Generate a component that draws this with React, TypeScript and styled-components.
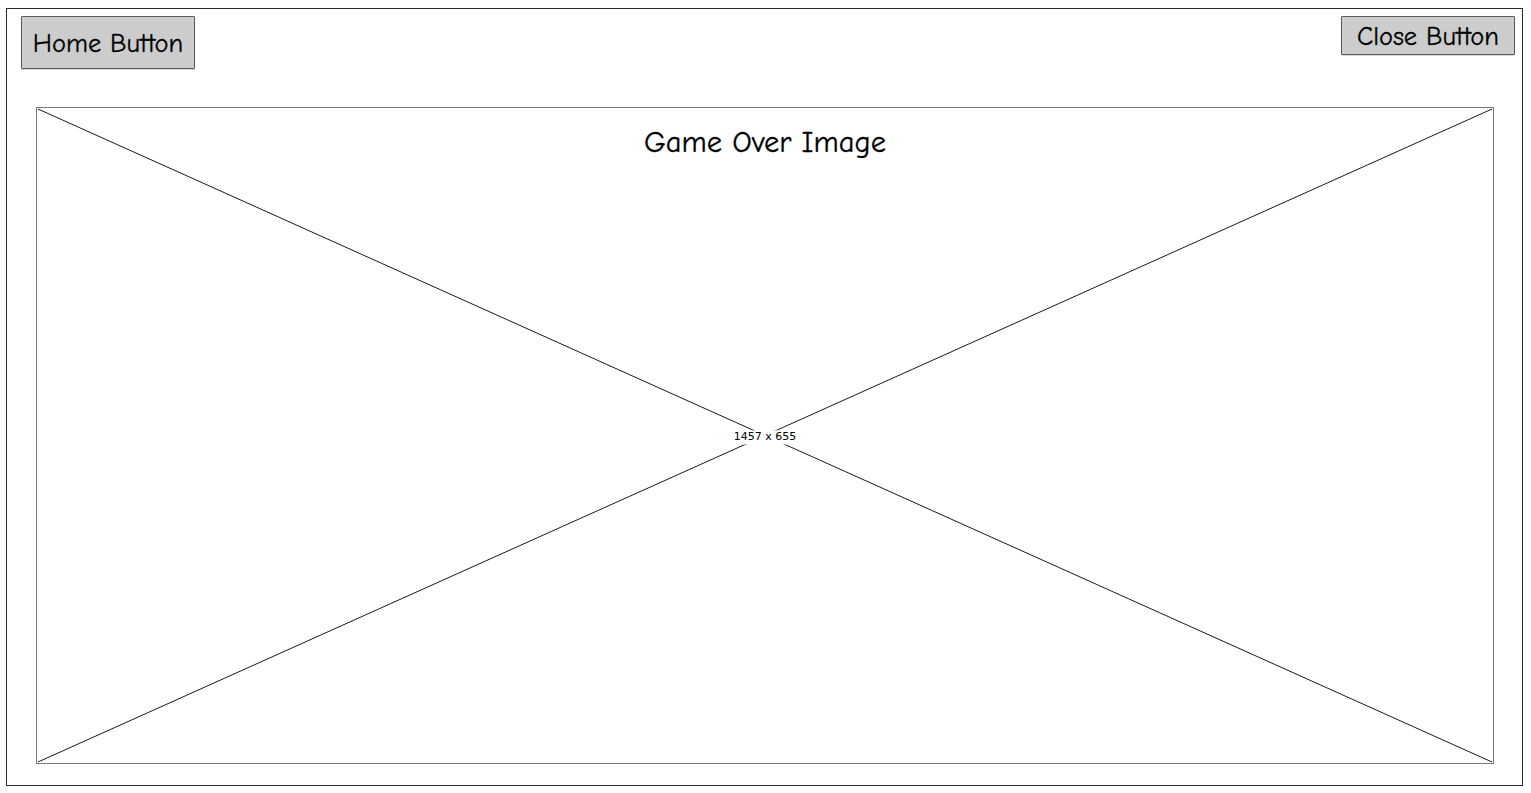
import React from 'react';
import styled, { createGlobalStyle } from 'styled-components';

const GlobalStyle = createGlobalStyle`
	html, body {
		margin: 0;
		padding: 0;
		background: #ffffff;
	}
	body {
		font-family: 'Comic Sans MS', 'Comic Neue', cursive, sans-serif;
	}
`;

const Frame = styled.div`
	box-sizing: border-box;
	display: flex;
	flex-direction: column;
	width: 1517px;
	height: 778px;
	margin: 8px 0 0 6px;
	border: 1px solid #2b2b2b;
	background: #ffffff;
`;

const Header = styled.div`
	display: flex;
	justify-content: space-between;
	align-items: flex-start;
	padding: 7px 7px 0 14px;
`;

const SketchButton = styled.button<{ $height: number; $offset: number }>`
	box-sizing: border-box;
	width: 174px;
	height: ${(p) => p.$height}px;
	padding: ${(p) => p.$offset}px 0 0;
	border: 1px solid #5a5a5a;
	border-radius: 1px;
	background: #cccccc;
	color: #000000;
	font-family: inherit;
	font-size: 26.5px;
	line-height: 1;
	cursor: pointer;
	-webkit-text-stroke: 0.3px #000000;
	box-shadow: 0 1px 0 rgba(0, 0, 0, 0.15);
`;

const ImageBox = styled.div`
	position: relative;
	box-sizing: border-box;
	width: 1458px;
	height: 657px;
	margin: 38px 0 0 29px;
	border: 1px solid #7a7a7a;
	background: #ffffff;
`;

const Cross = styled.svg`
	display: block;
	width: 100%;
	height: 100%;
`;

const Title = styled.div`
	position: absolute;
	top: 17px;
	left: 0;
	right: 0;
	text-align: center;
	font-size: 30.5px;
	line-height: 1.2;
	color: #000000;
	-webkit-text-stroke: 0.3px #000000;
`;

const SizeLabel = styled.div`
	position: absolute;
	top: 50%;
	left: 50%;
	transform: translate(-50%, -40%);
	padding: 1px 0;
	background: #ffffff;
	font-family: 'DejaVu Sans', sans-serif;
	font-size: 11px;
	line-height: 12px;
	color: #000000;
	white-space: nowrap;
`;

export default function App() {
	return (
		<>
			<GlobalStyle />
			<Frame>
				<Header>
					<SketchButton $height={53} $offset={4}>Home Button</SketchButton>
					<SketchButton $height={39} $offset={3}>Close Button</SketchButton>
				</Header>
				<ImageBox>
					<Cross viewBox="0 0 1456 655" preserveAspectRatio="none">
						<line x1="1" y1="1" x2="1455" y2="654" stroke="#1a1a1a" strokeWidth="1" />
						<line x1="1455" y1="1" x2="1" y2="654" stroke="#1a1a1a" strokeWidth="1" />
					</Cross>
					<Title>Game Over Image</Title>
					<SizeLabel>1457 x 655</SizeLabel>
				</ImageBox>
			</Frame>
		</>
	);
}
